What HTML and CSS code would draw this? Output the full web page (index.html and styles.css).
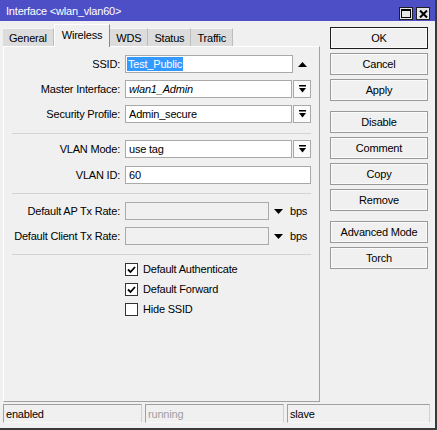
FILE: index.html
```html
<!DOCTYPE html>
<html>
<head>
<meta charset="utf-8">
<title>Interface</title>
<link rel="stylesheet" href="styles.css">
</head>
<body>
<div class="window">
  <div class="titlebar">
    <span class="title">Interface &lt;wlan_vlan60&gt;</span>
    <div class="wbtns">
      <span class="wbtn"><svg width="10" height="9" viewBox="0 0 10 9"><rect x="0.5" y="0.5" width="9" height="8" fill="none" stroke="#000" stroke-width="1"/><rect x="0" y="0" width="10" height="2" fill="#000"/></svg></span>
      <span class="wbtn"><svg width="9" height="8" viewBox="0 0 9 8"><path d="M1 0.5 L8 7.5 M8 0.5 L1 7.5" stroke="#000" stroke-width="2"/></svg></span>
    </div>
  </div>
  <div class="main">
    <div class="left">
      <div class="tabs">
        <span class="tab">General</span>
        <span class="tab active">Wireless</span>
        <span class="tab">WDS</span>
        <span class="tab">Status</span>
        <span class="tab">Traffic</span>
      </div>
      <div class="panel">
        <div class="row first">
          <span class="lbl">SSID:</span>
          <span class="field w168 selfield"><span class="sel">Test_Public</span></span>
          <span class="arrow"><svg width="9" height="5" viewBox="0 0 9 5"><polygon points="0,5 9,5 4.5,0" fill="#000"/></svg></span>
        </div>
        <div class="row m7">
          <span class="lbl">Master Interface:</span>
          <span class="field w167"><i>wlan1_Admin</i></span>
          <span class="ddbtn"><svg width="7" height="8" viewBox="0 0 7 8"><rect x="0" y="0" width="7" height="1.5" fill="#000"/><polygon points="0,3 7,3 3.5,7.5" fill="#000"/></svg></span>
        </div>
        <div class="row m7">
          <span class="lbl">Security Profile:</span>
          <span class="field w167">Admin_secure</span>
          <span class="ddbtn"><svg width="7" height="8" viewBox="0 0 7 8"><rect x="0" y="0" width="7" height="1.5" fill="#000"/><polygon points="0,3 7,3 3.5,7.5" fill="#000"/></svg></span>
        </div>
        <div class="sep m10"></div>
        <div class="row m6">
          <span class="lbl">VLAN Mode:</span>
          <span class="field w167">use tag</span>
          <span class="ddbtn"><svg width="7" height="8" viewBox="0 0 7 8"><rect x="0" y="0" width="7" height="1.5" fill="#000"/><polygon points="0,3 7,3 3.5,7.5" fill="#000"/></svg></span>
        </div>
        <div class="row m8">
          <span class="lbl">VLAN ID:</span>
          <span class="field w186">60</span>
        </div>
        <div class="sep m9"></div>
        <div class="row m8">
          <span class="lbl">Default AP Tx Rate:</span>
          <span class="field w144 disabled"></span>
          <span class="arrow"><svg width="9" height="5" viewBox="0 0 9 5"><polygon points="0,0 9,0 4.5,5" fill="#000"/></svg></span>
          <span class="unit">bps</span>
        </div>
        <div class="row m7">
          <span class="lbl">Default Client Tx Rate:</span>
          <span class="field w144 disabled"></span>
          <span class="arrow"><svg width="9" height="5" viewBox="0 0 9 5"><polygon points="0,0 9,0 4.5,5" fill="#000"/></svg></span>
          <span class="unit">bps</span>
        </div>
        <div class="sep m9"></div>
        <div class="chk m4">
          <span class="box"><svg width="11" height="11" viewBox="0 0 11 11"><path d="M2 5.5 L4.5 8 L9 3" fill="none" stroke="#000" stroke-width="1.8"/></svg></span>
          <span>Default Authenticate</span>
        </div>
        <div class="chk">
          <span class="box"><svg width="11" height="11" viewBox="0 0 11 11"><path d="M2 5.5 L4.5 8 L9 3" fill="none" stroke="#000" stroke-width="1.8"/></svg></span>
          <span>Default Forward</span>
        </div>
        <div class="chk">
          <span class="box"></span>
          <span>Hide SSID</span>
        </div>
      </div>
    </div>
    <div class="buttons">
      <span class="btn default">OK</span>
      <span class="btn">Cancel</span>
      <span class="btn">Apply</span>
      <span class="btn gap">Disable</span>
      <span class="btn">Comment</span>
      <span class="btn">Copy</span>
      <span class="btn">Remove</span>
      <span class="btn gap">Advanced Mode</span>
      <span class="btn">Torch</span>
    </div>
  </div>
  <div class="status">
    <span class="cell c1">enabled</span>
    <span class="cell c2 dim">running</span>
    <span class="cell c3">slave</span>
  </div>
</div>
</body>
</html>
```

FILE: styles.css
```css
* { box-sizing: border-box; }
html, body { margin: 0; padding: 0; }
body {
  font-family: "Liberation Sans", Arial, sans-serif;
  font-size: 11px;
  letter-spacing: -0.2px;
  color: #000;
  background: #f0f0f0;
}
.window {
  width: 437px;
  height: 430px;
  display: flex;
  flex-direction: column;
  background: #f0f0f0;
  border-right: 2px solid #3a3a3a;
  border-bottom: 2px solid #3a3a3a;
}
.titlebar {
  height: 21px;
  flex: none;
  background: #4d4fc7;
  color: #fff;
  display: flex;
  align-items: center;
  padding: 0 5px 0 6px;
  font-size: 11px;
}
.title { flex: 1; }
.wbtns {
  display: flex;
  gap: 3px;
  align-self: flex-start;
  margin-top: 7px;
}
.wbtn {
  width: 14px;
  height: 13px;
  background: #e6e6e6;
  border: 1px solid #1e1e1e;
  display: flex;
  align-items: center;
  justify-content: center;
}
.main {
  flex: 1;
  display: flex;
  min-height: 0;
}
.left {
  width: 320px;
  padding-left: 3px;
  display: flex;
  flex-direction: column;
}
.tabs {
  height: 25px;
  flex: none;
  display: flex;
  align-items: flex-end;
}
.tab {
  height: 18px;
  padding: 0 6px;
  background: #dcdcdc;
  border-top: 1px solid #f6f6f6;
  border-right: 1px solid #bdbdbd;
  display: flex;
  align-items: center;
}
.tab.active {
  height: 23px;
  margin-bottom: -1px;
  position: relative;
  z-index: 1;
  background: #f0f0f0;
  border-top: 1px solid #fff;
  border-left: 1px solid #fff;
  border-right: 1px solid #8a8a8a;
  padding: 0 7px 2px 7px;
}
.panel {
  flex: 1;
  border-top: 1px solid #fff;
  border-left: 1px solid #fff;
  border-right: 1px solid #a0a0a0;
  border-bottom: 1px solid #a0a0a0;
  padding-top: 8px;
  display: flex;
  flex-direction: column;
}
.row {
  display: flex;
  align-items: center;
  height: 18px;
  flex: none;
}
.m4 { margin-top: 4px; }
.m6 { margin-top: 6px; }
.m7 { margin-top: 7px; }
.m8 { margin-top: 8px; }
.m9 { margin-top: 9px; }
.m10 { margin-top: 10px; }
.lbl {
  width: 121px;
  flex: none;
  text-align: right;
  padding-right: 5px;
  white-space: nowrap;
}
.field {
  height: 18px;
  flex: none;
  border: 1px solid #a9a9a9;
  background: #fff;
  padding: 0 3px;
  display: flex;
  align-items: center;
  white-space: nowrap;
}
.field.selfield { padding-left: 1px; }
.field.disabled { background: #f0f0f0; }
.w144 { width: 144px; }
.w167 { width: 167px; }
.w168 { width: 168px; }
.w186 { width: 186px; }
.sel {
  background: #3399ff;
  color: #fff;
  line-height: 14px;
  padding: 0 1px;
}
.arrow {
  width: 18px;
  height: 18px;
  flex: none;
  display: flex;
  align-items: center;
  justify-content: center;
}
.ddbtn {
  width: 18px;
  height: 18px;
  flex: none;
  margin-left: 1px;
  border: 1px solid #a9a9a9;
  background: #fbfbfb;
  display: flex;
  align-items: center;
  justify-content: center;
}
.unit { margin-left: 3px; }
.sep {
  height: 1px;
  flex: none;
  background: #d4d4d4;
  margin-left: 8px;
  margin-right: 8px;
}
.chk {
  display: flex;
  align-items: center;
  height: 20px;
  flex: none;
  padding-left: 121px;
}
.box {
  width: 13px;
  height: 13px;
  flex: none;
  border: 1px solid #333;
  background: #fff;
  margin-right: 5px;
  display: flex;
  align-items: center;
  justify-content: center;
}
.buttons {
  width: 98px;
  margin-left: 10px;
  padding-top: 6px;
  display: flex;
  flex-direction: column;
}
.btn {
  height: 22px;
  flex: none;
  margin-top: 4px;
  border: 1px solid #999;
  box-shadow: inset 0 0 0 1px #fbfbfb;
  background: #f0f0f0;
  display: flex;
  align-items: center;
  justify-content: center;
}
.btn.default {
  margin-top: 0;
  border-color: #1e1e1e;
}
.btn.gap { margin-top: 10px; }
.status {
  height: 26px;
  flex: none;
  display: flex;
  gap: 3px;
  padding: 2px 5px 5px 3px;
}
.cell {
  height: 19px;
  flex: none;
  border-top: 1px solid #a0a0a0;
  border-left: 1px solid #a0a0a0;
  border-right: 1px solid #d0d0d0;
  border-bottom: 1px solid #f8f8f8;
  padding-left: 2px;
  display: flex;
  align-items: center;
}
.c1 { width: 139px; }
.c2 { width: 139px; }
.c3 { width: 143px; }
.dim { color: #a0a0a0; }
```
